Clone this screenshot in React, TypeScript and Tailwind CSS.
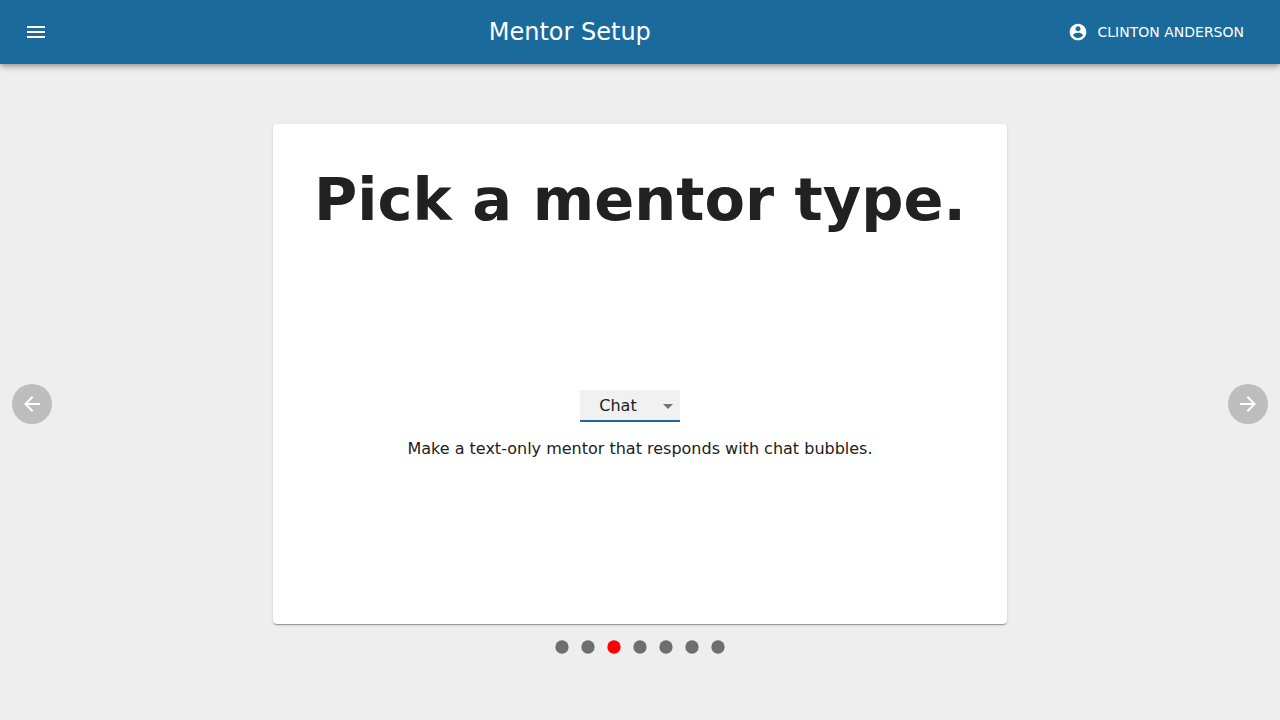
import { useState } from "react";
import type { ReactNode } from "react";

const mentorTypes = [
  { name: "Chat", description: "Make a text-only mentor that responds with chat bubbles." },
  { name: "Video", description: "Make a video mentor that responds with pre-recorded video answers." },
];

const steps = ["Welcome", "Your info", "Mentor type", "Introduction", "Subjects", "Questions", "Build"];

const icons = {
  menu: "M3 18h18v-2H3v2zm0-5h18v-2H3v2zm0-7v2h18V6H3z",
  account:
    "M12 2C6.48 2 2 6.48 2 12s4.48 10 10 10 10-4.48 10-10S17.52 2 12 2zm0 3c1.66 0 3 1.34 3 3s-1.34 3-3 3-3-1.34-3-3 1.34-3 3-3zm0 14.2c-2.5 0-4.71-1.28-6-3.22.03-1.99 4-3.08 6-3.08 1.99 0 5.97 1.09 6 3.08-1.29 1.94-3.5 3.22-6 3.22z",
  back: "M20 11H7.83l5.59-5.59L12 4l-8 8 8 8 1.41-1.41L7.83 13H20v-2z",
  forward: "M12 4l-1.41 1.41L16.17 11H4v2h12.17l-5.58 5.59L12 20l8-8z",
  dropDown: "M7 10l5 5 5-5z",
  dot: "M4 12a8 8 0 1 0 16 0a8 8 0 1 0-16 0z",
};

function Icon({ path, className }: { path: string; className: string }) {
  return (
    <svg viewBox="0 0 24 24" fill="currentColor" aria-hidden="true" className={className}>
      <path d={path} />
    </svg>
  );
}

function NavButton({ label, onClick, children }: { label: string; onClick: () => void; children: ReactNode }) {
  return (
    <button
      type="button"
      aria-label={label}
      onClick={onClick}
      className="flex size-10 shrink-0 items-center justify-center rounded-full bg-[#bdbdbd] text-white"
    >
      {children}
    </button>
  );
}

export default function App() {
  const [step, setStep] = useState(2);
  const [type, setType] = useState("Chat");
  const description = mentorTypes.find((t) => t.name === type)?.description;

  return (
    <div className="flex min-h-screen flex-col bg-[#eeeeee] font-['DejaVu_Sans',sans-serif] text-[#212121]">
      <header className="flex h-16 items-center bg-[#1b6a9c] px-6 text-white shadow-[0_2px_4px_-1px_rgba(0,0,0,0.2),0_4px_5px_0_rgba(0,0,0,0.14),0_1px_10px_0_rgba(0,0,0,0.12)]">
        <button type="button" aria-label="Menu">
          <Icon path={icons.menu} className="size-6" />
        </button>
        <h1 className="flex-1 pl-8 text-center text-2xl">Mentor Setup</h1>
        <button type="button" className="flex items-center gap-2.5 pr-3 pl-2 text-sm uppercase">
          <Icon path={icons.account} className="size-5" />
          Clinton Anderson
        </button>
      </header>

      <main className="flex flex-1 items-center justify-between px-3 pt-6">
        <NavButton label="Previous" onClick={() => setStep(Math.max(0, step - 1))}>
          <Icon path={icons.back} className="size-6" />
        </NavButton>

        <div className="flex flex-col items-center self-stretch pt-9">
          <section className="flex min-h-[500px] flex-col items-center rounded bg-white px-[41px] pt-10 shadow-[0_2px_1px_-1px_rgba(0,0,0,0.2),0_1px_1px_0_rgba(0,0,0,0.14),0_1px_3px_0_rgba(0,0,0,0.12)]">
            <h2 className="text-[59px] leading-[72px] font-bold">Pick a mentor type.</h2>
            <div className="flex flex-1 flex-col items-center justify-center pb-[9px]">
              <div className="relative mr-5 w-[100px]">
                <select
                  aria-label="Mentor type"
                  value={type}
                  onChange={(e) => setType(e.target.value)}
                  className="block h-8 w-full appearance-none border-b-2 border-[#1b6a9c] bg-[#f1f1f1] pt-0.5 pr-6 text-center text-base outline-none"
                >
                  {mentorTypes.map((t) => (
                    <option key={t.name}>{t.name}</option>
                  ))}
                </select>
                <Icon
                  path={icons.dropDown}
                  className="pointer-events-none absolute top-1 right-0 size-6 text-[#757575]"
                />
              </div>
              <p className="mt-[15px] text-base">{description}</p>
            </div>
          </section>

          <nav aria-label="Setup steps" className="mt-[13px] flex gap-1.5">
            {steps.map((name, i) => (
              <button
                key={name}
                type="button"
                aria-label={name}
                onClick={() => setStep(i)}
                className={i === step ? "text-[#ff0000]" : "text-[#6e6e6e]"}
              >
                <Icon path={icons.dot} className="size-5" />
              </button>
            ))}
          </nav>
        </div>

        <NavButton label="Next" onClick={() => setStep(Math.min(steps.length - 1, step + 1))}>
          <Icon path={icons.forward} className="size-6" />
        </NavButton>
      </main>
    </div>
  );
}
